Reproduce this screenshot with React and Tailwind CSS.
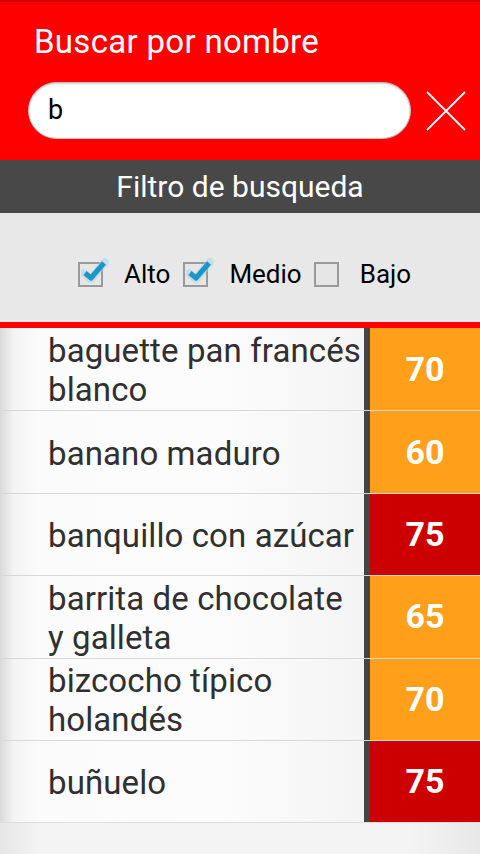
import React from "react";

const items = [
  { name: "baguette pan francés blanco", score: 70, color: "bg-[#ff9f1a]" },
  { name: "banano maduro", score: 60, color: "bg-[#ff9f1a]" },
  { name: "banquillo con azúcar", score: 75, color: "bg-[#cc0000]" },
  { name: "barrita de chocolate y galleta", score: 65, color: "bg-[#ff9f1a]" },
  { name: "bizcocho típico holandés", score: 70, color: "bg-[#ff9f1a]" },
  { name: "buñuelo", score: 75, color: "bg-[#cc0000]" },
];

function Check({ checked }) {
  return (
    <div className="relative w-[25px] h-[25px] border-2 border-[#9a9a9a] bg-[#e6e6e6]">
      {checked && (
        <svg className="absolute left-[1px] top-[-7px]" width="28" height="28" viewBox="0 0 28 28">
          <path d="M3 16 L10 22 L24 5" fill="none" stroke="#9fd6ec" strokeWidth="8" strokeLinecap="round" strokeLinejoin="round" opacity="0.5" />
          <path d="M4 16 L10 21 L23 6" fill="none" stroke="#1c95c8" strokeWidth="5" strokeLinejoin="round" />
        </svg>
      )}
    </div>
  );
}

export default function App() {
  return (
    <div className="w-[480px] h-[854px] overflow-hidden flex flex-col bg-[#ececec]" style={{ fontFamily: "Roboto, 'Noto Sans', sans-serif" }}>
      <div className="bg-[#ff0000] h-[160px] flex flex-col border-t-2 border-[#d40000]">
        <div className="pl-[34px] pt-[21px] text-white text-[33px] leading-[38px] tracking-[0.3px]">Buscar por nombre</div>
        <div className="flex items-center mt-[21px] pl-[28px]">
          <div className="w-[383px] h-[57px] bg-white rounded-full border border-[#bdbdbd] flex items-center pl-[19px] text-[27px] text-black shadow-[inset_0_1px_2px_rgba(0,0,0,0.2)]">b</div>
          <svg className="ml-[15px]" width="40" height="40" viewBox="0 0 40 40">
            <path d="M1 1 L39 39 M39 1 L1 39" stroke="white" strokeWidth="1.8" />
          </svg>
        </div>
      </div>
      <div className="bg-[#484848] h-[53px] flex items-center justify-center text-white text-[30px]">Filtro de busqueda</div>
      <div className="bg-[#e8e8e8] h-[109px] flex items-center pl-[78px] pt-[14px] text-[26px] text-black">
        <Check checked />
        <span className="ml-[21px]">Alto</span>
        <div className="ml-[13px]"><Check checked /></div>
        <span className="ml-[21px]">Medio</span>
        <div className="ml-[12px]"><Check /></div>
        <span className="ml-[21px]">Bajo</span>
      </div>
      <div className="h-[6px] bg-[#ff0000]" />
      <div className="flex flex-col">
        {items.map((it, i) => (
          <div key={i} className={`flex h-[82.4px] ${i > 0 ? "border-t border-[#d8d8d8]" : ""}`}>
            <div className="w-[364px] flex items-center pl-[48px] pr-[2px] pt-[2px] text-[33px] leading-[39px] tracking-[0.1px] text-[#303030] bg-[linear-gradient(to_right,#d9d9d9_0px,#f4f4f4_14px,#fbfbfb_40px,#fcfcfc_60%,#f4f4f4_100%)]">
              <span>{it.name}</span>
            </div>
            <div className="w-[6px] bg-[#454545]" />
            <div className={`flex-1 ${it.color} flex items-center justify-center text-white font-bold text-[34px]`}>{it.score}</div>
          </div>
        ))}
      </div>
      <div className="flex-1 border-t border-[#dcdcdc] bg-[linear-gradient(to_right,#e6e6e6_0px,#f4f4f4_40px,#f4f4f4_85%,#e8e8e8_100%)]" />
    </div>
  );
}
